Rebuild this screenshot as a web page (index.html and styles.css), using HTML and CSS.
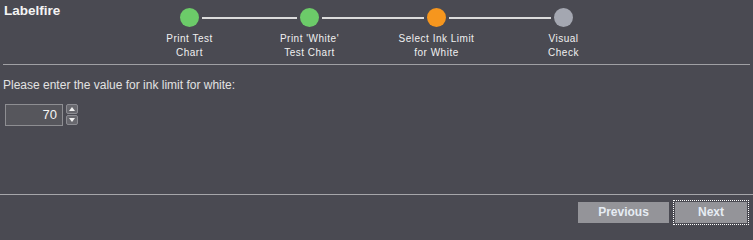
FILE: index.html
```html
<!DOCTYPE html>
<html>
<head>
<meta charset="utf-8">
<link rel="stylesheet" href="styles.css">
</head>
<body>
<div class="page">
  <div class="header">
    <div class="title">Labelfire</div>
    <div class="stepper">
      <div class="step">
        <div class="dot done"></div>
        <div class="label">Print Test<br>Chart</div>
      </div>
      <div class="conn c1"></div>
      <div class="step">
        <div class="dot done"></div>
        <div class="label">Print 'White'<br>Test Chart</div>
      </div>
      <div class="conn c2"></div>
      <div class="step">
        <div class="dot active"></div>
        <div class="label">Select Ink Limit<br>for White</div>
      </div>
      <div class="conn c2"></div>
      <div class="step">
        <div class="dot todo"></div>
        <div class="label">Visual<br>Check</div>
      </div>
    </div>
  </div>
  <div class="content">
    <div class="prompt">Please enter the value for ink limit for white:</div>
    <div class="field">
      <div class="input">70</div>
      <div class="spin">
        <div class="spin-btn"><span class="tri up"></span></div>
        <div class="spin-btn"><span class="tri down"></span></div>
      </div>
    </div>
  </div>
  <div class="footer">
    <button class="btn">Previous</button>
    <button class="btn focus">Next</button>
  </div>
</div>
</body>
</html>
```

FILE: styles.css
```css
html, body {
  margin: 0;
  padding: 0;
  background: #4a4a52;
}
.page {
  width: 753px;
  height: 233px;
  display: flex;
  flex-direction: column;
  font-family: "Liberation Sans", Arial, sans-serif;
  color: #e4e4e4;
  overflow: hidden;
}
.header {
  display: flex;
  align-items: flex-start;
  height: 64px;
  margin: 0 3px;
  border-bottom: 1px solid #a0a0a4;
  flex: 0 0 auto;
}
.title {
  flex: 0 0 176px;
  padding-left: 1px;
  padding-top: 3px;
  font-size: 13.5px;
  font-weight: bold;
  line-height: 16px;
  color: #f4f4f4;
}
.stepper {
  display: flex;
  align-items: flex-start;
  margin-top: 8px;
}
.step {
  width: 19px;
  display: flex;
  flex-direction: column;
  align-items: center;
}
.dot {
  width: 19px;
  height: 19px;
  border-radius: 50%;
  flex: 0 0 auto;
}
.dot.done { background: #6ccb69; }
.dot.active { background: #f6961e; }
.dot.todo { background: #a4a7b1; }
.label {
  flex: 0 0 auto;
  width: 110px;
  margin-top: 5px;
  text-align: center;
  font-size: 10px;
  line-height: 14px;
  letter-spacing: 0.5px;
  color: #f0f0f0;
  white-space: nowrap;
}
.conn {
  height: 2px;
  margin: 9px 3px 0;
  background: #dcdcdc;
  flex: 0 0 auto;
}
.conn.c1 { width: 95px; }
.conn.c2 { width: 102px; }
.content {
  flex: 1 1 auto;
  padding: 13px 3px 0;
  border-bottom: 1px solid #a6a6aa;
}
.prompt {
  font-size: 12px;
  line-height: 14px;
  color: #e2e2e2;
}
.field {
  display: flex;
  align-items: flex-start;
  gap: 3px;
  margin-top: 12px;
  margin-left: 2px;
}
.input {
  box-sizing: border-box;
  width: 58px;
  height: 22px;
  border: 1px solid #8e8e92;
  background: #56565c;
  color: #f4f4f4;
  font-size: 13px;
  line-height: 20px;
  text-align: right;
  padding-right: 5px;
}
.spin {
  display: flex;
  flex-direction: column;
  gap: 1px;
}
.spin-btn {
  box-sizing: border-box;
  width: 12px;
  height: 10px;
  border: 1px solid #8c8c92;
  border-radius: 2px;
  background: #68686e;
  display: flex;
  align-items: center;
  justify-content: center;
}
.tri {
  width: 0;
  height: 0;
  border-left: 3px solid transparent;
  border-right: 3px solid transparent;
}
.tri.up { border-bottom: 4px solid #f0f0f0; }
.tri.down { border-top: 4px solid #f0f0f0; }
.footer {
  flex: 0 0 38px;
  display: flex;
  justify-content: flex-end;
  align-items: flex-start;
  gap: 6px;
  padding: 7px 6px 0 0;
  box-sizing: border-box;
}
.btn {
  height: 21px;
  width: 91px;
  border: none;
  padding: 0;
  margin: 0;
  background: #949499;
  color: #e6ecf3;
  font-family: "Liberation Sans", Arial, sans-serif;
  font-size: 12px;
  font-weight: bold;
  line-height: 21px;
}
.btn.focus {
  width: 72px;
  outline: 1px dotted #ffffff;
  outline-offset: 1px;
}
```
